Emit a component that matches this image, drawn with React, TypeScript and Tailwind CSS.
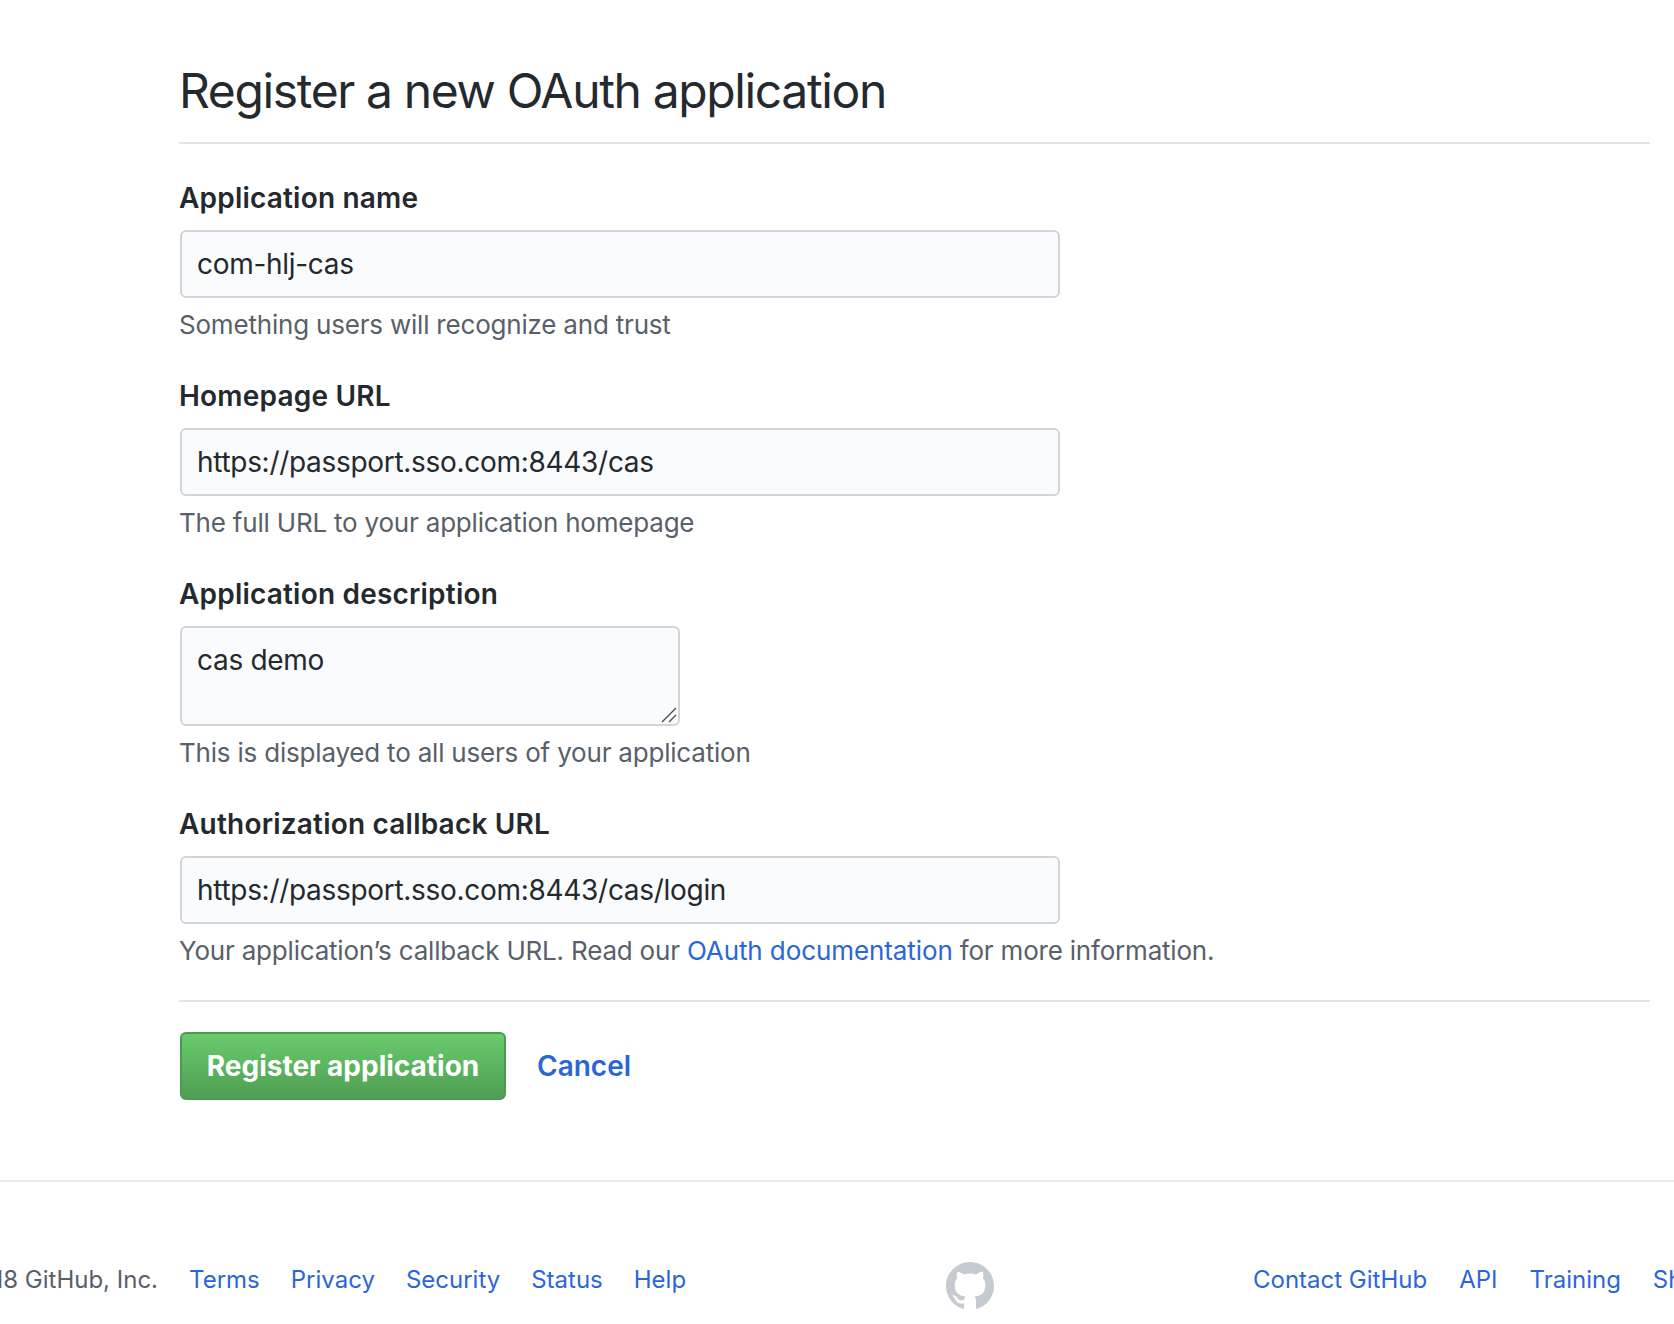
const inter = "font-['Inter',sans-serif]";

const labelCls = "block text-[28px] leading-[40px] font-semibold tracking-[0.2px] text-[#24292e] mb-[12px]";
const inputCls =
  "block ml-px w-[880px] h-[68px] px-[15px] text-[28px] tracking-[-0.3px] text-[#24292e] bg-[#fafbfc] border-2 border-[#d1d5da] rounded-[6px] outline-none";
const hintCls = "mt-[7px] text-[26px] leading-[40px] tracking-[-0.2px] text-[#586069]";

const Field = ({ label, value, hint }: { label: string; value: string; hint: string }) => (
  <div className="mb-[31px]">
    <label className={labelCls}>{label}</label>
    <input readOnly value={value} className={inputCls} />
    <p className={hintCls}>{hint}</p>
  </div>
);

const FooterLink = ({ children }: { children: string }) => (
  <a href="#" className="text-[#2b66d9] whitespace-nowrap">{children}</a>
);

export default function App() {
  return (
    <div className={`${inter} bg-white min-h-[1324px] overflow-hidden`}>
      <main className="pl-[179px] pr-[24px] pt-[57px]">
        <h1 className="text-[48px] leading-[68px] font-normal tracking-[-1.36px] text-[#24292e] pb-[17px] border-b-2 border-[#e1e4e8] mb-[34px]">
          Register a new OAuth application
        </h1>
        <Field label="Application name" value="com-hlj-cas" hint="Something users will recognize and trust" />
        <Field label="Homepage URL" value="https://passport.sso.com:8443/cas" hint="The full URL to your application homepage" />
        <div className="mb-[31px]">
          <label className={labelCls}>Application description</label>
          <div className="relative ml-px w-[500px] h-[100px]">
            <textarea
              readOnly
              value="cas demo"
              className="block w-full h-full px-[15px] py-[12px] text-[28px] leading-[40px] tracking-[-0.3px] text-[#24292e] bg-[#fafbfc] border-2 border-[#d1d5da] rounded-[6px] outline-none resize-none"
            />
            <svg className="absolute right-[2px] bottom-[2px]" width="18" height="18" viewBox="0 0 18 18" fill="none" stroke="#555" strokeWidth="1.5">
              <path d="M2 16 L16 2" />
              <path d="M9 16 L16 9" />
            </svg>
          </div>
          <p className={hintCls}>This is displayed to all users of your application</p>
        </div>
        <div>
          <label className={labelCls}>Authorization callback URL</label>
          <input readOnly value="https://passport.sso.com:8443/cas/login" className={inputCls} />
          <p className={hintCls}>
            Your application’s callback URL. Read our <a href="#" className="text-[#2b66d9] tracking-[-0.09px]">OAuth documentation</a> for more information.
          </p>
        </div>
        <div className="mt-[29px] border-t-2 border-[#e1e4e8] pt-[30px] flex items-center">
          <button className="ml-px h-[68px] w-[326px] rounded-[6px] border-2 border-[#4c9a52] bg-gradient-to-b from-[#69cb6c] to-[#4f9f54] text-white text-[28px] font-bold">
            Register application
          </button>
          <a href="#" className="ml-[31px] text-[28px] font-semibold text-[#2b66d9]">Cancel</a>
        </div>
      </main>
      <footer className="mt-[80px] border-t-2 border-[#e9eaec] pt-[80px]">
        <div className="flex items-start w-[2024px] -ml-[65px] text-[24px] leading-[36px] text-[#586069]">
          <div className="flex gap-[31px] w-[1318px] shrink-0">
            <span className="whitespace-nowrap">© 2018 GitHub, Inc.</span>
            <FooterLink>Terms</FooterLink>
            <FooterLink>Privacy</FooterLink>
            <FooterLink>Security</FooterLink>
            <FooterLink>Status</FooterLink>
            <FooterLink>Help</FooterLink>
            <svg width="48" height="48" viewBox="0 0 16 16" fill="#c6cbd1" className="ml-auto mr-[259px]">
              <path d="M8 0C3.58 0 0 3.58 0 8c0 3.54 2.29 6.53 5.47 7.59.4.07.55-.17.55-.38 0-.19-.01-.82-.01-1.49-2.01.37-2.53-.49-2.69-.94-.09-.23-.48-.94-.82-1.13-.28-.15-.68-.52-.01-.53.63-.01 1.08.58 1.23.82.72 1.21 1.87.87 2.33.66.07-.52.28-.87.51-1.07-1.78-.2-3.64-.89-3.64-3.95 0-.87.31-1.59.82-2.15-.08-.2-.36-1.02.08-2.12 0 0 .67-.21 2.2.82.64-.18 1.32-.27 2-.27s1.36.09 2 .27c1.53-1.04 2.2-.82 2.2-.82.44 1.1.16 1.92.08 2.12.51.56.82 1.27.82 2.15 0 3.07-1.87 3.75-3.65 3.95.29.25.54.73.54 1.48 0 1.07-.01 1.93-.01 2.2 0 .21.15.46.55.38A8.01 8.01 0 0 0 16 8c0-4.42-3.58-8-8-8z" />
            </svg>
          </div>
          <div className="flex gap-[32px]">
            <FooterLink>Contact GitHub</FooterLink>
            <FooterLink>API</FooterLink>
            <FooterLink>Training</FooterLink>
            <FooterLink>Shop</FooterLink>
            <FooterLink>Blog</FooterLink>
            <FooterLink>About</FooterLink>
          </div>
        </div>
      </footer>
    </div>
  );
}
